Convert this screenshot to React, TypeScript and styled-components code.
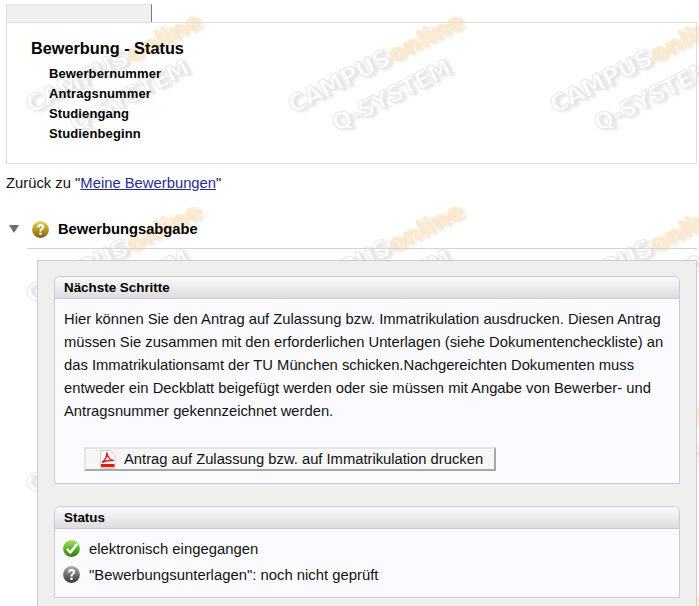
import React from 'react';
import styled, { createGlobalStyle } from 'styled-components';

const GlobalStyle = createGlobalStyle`
  html, body {
    margin: 0;
    padding: 0;
    height: 606px;
    overflow: hidden;
    background: #fff;
    font-family: "Liberation Sans", Arial, sans-serif;
    color: #000;
  }
`;

const Page = styled.div`
  position: relative;
  width: 699px;
  height: 606px;
  overflow: hidden;
`;
const WatermarkLayer = styled.div`
  position: absolute;
  inset: 0;
  display: grid;
  grid-template-columns: repeat(3, 262px);
  grid-auto-rows: 190px;
  margin-left: 21px;
  margin-top: 4px;
`;
const Content = styled.div`
  position: relative;
  padding: 4px 2px 0 6px;
`;
const Tab = styled.div`
  width: 144px;
  height: 17px;
  background: #f0f0f0;
  border-top: 1px solid #e2e2e2;
  border-left: 1px solid #e2e2e2;
  border-right: 1px solid #7a7a7a;
  box-sizing: content-box;
`;
const HeaderBox = styled.div`
  box-sizing: border-box;
  height: 142px;
  border: 1px solid #dedede;
  padding: 16px 0 0 24px;
`;
const Title = styled.h1`
  margin: 0;
  font-size: 16.3px;
  line-height: 19px;
  font-weight: bold;
`;
const InfoList = styled.div`
  display: flex;
  flex-direction: column;
  padding: 6px 0 0 18px;
`;
const InfoRow = styled.div`
  font-size: 13px;
  line-height: 20px;
  font-weight: bold;
  letter-spacing: 0.12px;
`;
const BackLine = styled.p`
  margin: 0;
  padding-top: 9px;
  font-size: 14.8px;
  line-height: 20px;
  color: #111;
`;
const BackLink = styled.a`
  color: #2a2a90;
  text-decoration: underline;
`;
const SectionHead = styled.div`
  display: flex;
  align-items: center;
  height: 28px;
  margin-top: 22px;
  padding-left: 3px;
`;
const Triangle = styled.span`
  width: 0;
  height: 0;
  border-left: 5px solid transparent;
  border-right: 5px solid transparent;
  border-top: 8px solid #6e6e6e;
  margin-right: 13px;
`;
const SectionTitle = styled.h2`
  margin: 0 0 0 9px;
  font-size: 14.7px;
  font-weight: bold;
`;
const Rule = styled.div`
  height: 1px;
  background: #d2d2d8;
  margin: 5px 0 0 21px;
`;
const GrayBox = styled.div`
  box-sizing: border-box;
  margin: 11px 0 0 31px;
  height: 400px;
  background: #efefed;
  border: 1px solid #c9c9e0;
  padding: 15px 16px 0 16px;
  display: flex;
  flex-direction: column;
  gap: 22px;
`;
const Panel = styled.section`
  border: 1px solid #c9c9e0;
  border-radius: 6px 6px 0 0;
  background: #fbfbff;
`;
const PanelHead = styled.div`
  height: 21px;
  line-height: 22px;
  padding-left: 9px;
  font-size: 13.4px;
  font-weight: bold;
  border-bottom: 1px solid #c9c9e0;
  border-radius: 5px 5px 0 0;
  background: linear-gradient(#fbfbfb, #dcdcdc);
`;
const PanelText = styled.p`
  margin: 0;
  padding: 9px 7px 0 9px;
  font-size: 14.78px;
  line-height: 23px;
  color: #111;
`;
const ButtonRow = styled.div`
  padding: 24px 0 12px 29px;
`;
const PrintButton = styled.button`
  display: flex;
  align-items: center;
  gap: 8px;
  box-sizing: border-box;
  width: 412px;
  height: 24px;
  padding: 0 0 0 14px;
  background: #f6f6f6;
  border-style: solid;
  border-width: 2px;
  border-color: #e4e4e4 #a8a8a8 #a8a8a8 #e4e4e4;
  font-family: inherit;
  font-size: 14.75px;
  color: #111;
`;
const StatusList = styled.div`
  display: flex;
  flex-direction: column;
  gap: 9px;
  padding: 11px 0 14px 8px;
`;
const StatusRow = styled.div`
  display: flex;
  align-items: center;
  gap: 9px;
  height: 17px;
  font-size: 14.85px;
  color: #111;
`;

const WM_FONT = '"DejaVu Sans", sans-serif';

const Watermark = () => (
  <svg width="262" height="190" viewBox="0 0 262 190">
    <defs>
      <filter id="wmshadow" x="-20%" y="-20%" width="140%" height="140%">
        <feGaussianBlur stdDeviation="1.6" />
      </filter>
    </defs>
    <g transform="rotate(-27 10 110)" fontFamily={WM_FONT} fontWeight="bold">
      <g filter="url(#wmshadow)" transform="translate(3 3)" fill="#e2e2e2">
        <text x="10" y="110" fontSize="24" letterSpacing="-0.5">CAMPUS</text>
        <text x="122" y="110" fontSize="24" letterSpacing="-0.5" fill="#f0e4d2">online</text>
        <text x="41" y="146" fontSize="23" letterSpacing="-0.5">Q-SYSTEM</text>
      </g>
      <text x="10" y="110" fontSize="24" letterSpacing="-0.5" fill="#fff" stroke="#e4e4e4" strokeWidth="0.8">CAMPUS</text>
      <text x="122" y="110" fontSize="24" letterSpacing="-0.5" fill="#fde9cc">online</text>
      <text x="41" y="146" fontSize="23" letterSpacing="-0.5" fill="#fff" stroke="#e4e4e4" strokeWidth="0.8">Q-SYSTEM</text>
    </g>
  </svg>
);

type BallProps = { from: string; mid: string; to: string; id: string };

// glossy round status icon, the mark goes in as children
const Ball = ({ from, mid, to, id, children }: React.PropsWithChildren<BallProps>) => (
  <svg width="17" height="17" viewBox="0 0 17 17">
    <defs>
      <linearGradient id={id} x1="0" y1="0" x2="0" y2="1">
        <stop offset="0%" stopColor={from} />
        <stop offset="50%" stopColor={mid} />
        <stop offset="100%" stopColor={to} />
      </linearGradient>
    </defs>
    <circle cx="8.5" cy="8.5" r="8.4" fill={`url(#${id})`} />
    {children}
  </svg>
);

const QuestionMark = ({ color }: { color: string }) => (
  <>
    <path
      d="M5.2 6.4 C5.2 4.2 6.8 3 8.7 3 C10.7 3 12.1 4.2 12.1 6 C12.1 8.3 9.6 8.4 9.5 10.4 L7.5 10.4 C7.4 7.8 9.9 7.5 9.9 6.1 C9.9 5.4 9.4 5 8.6 5 C7.9 5 7.3 5.5 7.3 6.5 Z"
      fill={color}
    />
    <circle cx="8.5" cy="12.7" r="1.3" fill={color} />
  </>
);

const PdfIcon = () => (
  <svg width="16" height="19" viewBox="0 0 16 19">
    <path d="M.5 .5 H11 L15 4.5 V18.5 H.5 Z" fill="#fff" stroke="#cfcfcf" />
    <path d="M11 .5 V4.5 H15 Z" fill="#e8e8e8" />
    <path
      d="M2 12.5 C5 11 7 6.5 6.8 2.5 C7.5 7 10 10 13.8 10.6 C10 10.2 5.5 10.8 2 12.5 Z"
      fill="none"
      stroke="#d8261c"
      strokeWidth="1.5"
    />
    <rect x="1" y="14" width="13.5" height="3.2" fill="#dc1c14" />
  </svg>
);

export default function App() {
  return (
    <Page>
      <GlobalStyle />
      <WatermarkLayer>
        {Array.from({ length: 12 }, (_, i) => (
          <Watermark key={i} />
        ))}
      </WatermarkLayer>
      <Content>
        <Tab />
        <HeaderBox>
          <Title>Bewerbung - Status</Title>
          <InfoList>
            <InfoRow>Bewerbernummer</InfoRow>
            <InfoRow>Antragsnummer</InfoRow>
            <InfoRow>Studiengang</InfoRow>
            <InfoRow>Studienbeginn</InfoRow>
          </InfoList>
        </HeaderBox>
        <BackLine>
          Zurück zu "<BackLink href="#">Meine Bewerbungen</BackLink>"
        </BackLine>
        <SectionHead>
          <Triangle />
          <Ball id="gold" from="#e8d66a" mid="#b89a24" to="#7a6010">
            <QuestionMark color="#fff" />
          </Ball>
          <SectionTitle>Bewerbungsabgabe</SectionTitle>
        </SectionHead>
        <Rule />
        <GrayBox>
          <Panel>
            <PanelHead>Nächste Schritte</PanelHead>
            <PanelText>
              Hier können Sie den Antrag auf Zulassung bzw. Immatrikulation ausdrucken. Diesen Antrag
              müssen Sie zusammen mit den erforderlichen Unterlagen (siehe Dokumentencheckliste) an
              das Immatrikulationsamt der TU München schicken.Nachgereichten Dokumenten muss
              entweder ein Deckblatt beigefügt werden oder sie müssen mit Angabe von Bewerber- und
              Antragsnummer gekennzeichnet werden.
            </PanelText>
            <ButtonRow>
              <PrintButton type="button">
                <PdfIcon />
                Antrag auf Zulassung bzw. auf Immatrikulation drucken
              </PrintButton>
            </ButtonRow>
          </Panel>
          <Panel>
            <PanelHead>Status</PanelHead>
            <StatusList>
              <StatusRow>
                <Ball id="green" from="#a8e060" mid="#5cb428" to="#2c7a10">
                  <path d="M4 8.8 L7.3 12.6 L14.2 3.8" fill="none" stroke="#fff" strokeWidth="2.4" />
                </Ball>
                elektronisch eingegangen
              </StatusRow>
              <StatusRow>
                <Ball id="grey" from="#b0b0b0" mid="#707070" to="#363636">
                  <QuestionMark color="#fff" />
                </Ball>
                "Bewerbungsunterlagen": noch nicht geprüft
              </StatusRow>
            </StatusList>
          </Panel>
        </GrayBox>
      </Content>
    </Page>
  );
}
